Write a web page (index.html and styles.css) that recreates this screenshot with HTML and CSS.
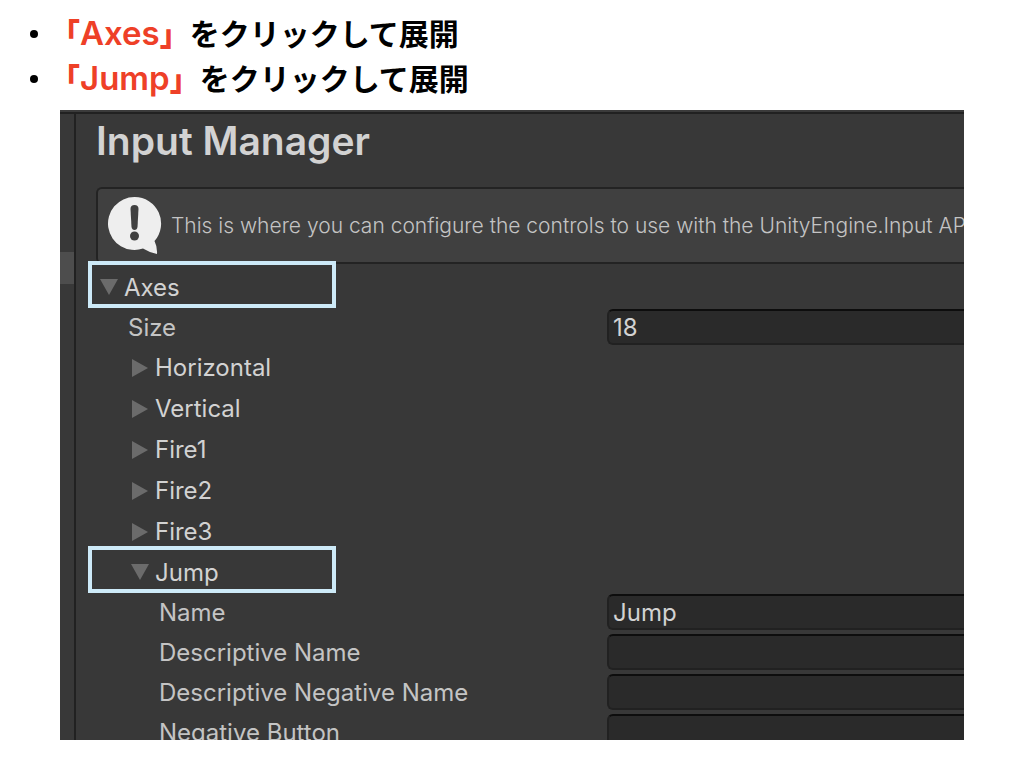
FILE: index.html
```html
<!DOCTYPE html>
<html lang="ja">
<head>
<meta charset="utf-8">
<title>Input Manager</title>
<link rel="stylesheet" href="styles.css">
</head>
<body>
<main class="slide">
  <ul class="steps">
    <li><strong>「<span class="latin">Axes</span>」</strong>をクリックして展開</li>
    <li><strong>「<span class="latin">Jump</span>」</strong>をクリックして展開</li>
  </ul>
  <section class="window" lang="en">
    <div class="sidebar"><div class="selected"></div></div>
    <div class="panel">
      <h1>Input Manager</h1>
      <div class="help">
        <svg class="bubble" viewBox="0 0 54 58" aria-hidden="true">
          <path fill="#eee" d="M26.500 0A26.500 26.500 0 1 0 35 51.600Q42 56 49 57Q49.500 50 46.500 44A26.500 26.500 0 0 0 26.500 0Z"/>
          <path fill="#404040" d="M22.500 12Q22.500 8 26.500 8T30.500 12L29.500 30Q29 33 26.500 33T23.500 30Z"/>
          <circle cx="26.500" cy="39" r="4.500" fill="#404040"/>
        </svg>
        <p>This is where you can configure the controls to use with the UnityEngine.Input API.</p>
      </div>
      <div class="tree">
        <button class="foldout marked root" aria-expanded="true"><svg class="arrow" viewBox="0 0 18 18"><path d="M0 1H18L9 17Z"/></svg>Axes</button>
        <div class="field level1"><label for="size">Size</label><input id="size" value="18"></div>
        <button class="foldout" aria-expanded="false"><svg class="arrow" viewBox="0 0 18 18"><path d="M1 0V18L17 9Z"/></svg>Horizontal</button>
        <button class="foldout" aria-expanded="false"><svg class="arrow" viewBox="0 0 18 18"><path d="M1 0V18L17 9Z"/></svg>Vertical</button>
        <button class="foldout" aria-expanded="false"><svg class="arrow" viewBox="0 0 18 18"><path d="M1 0V18L17 9Z"/></svg>Fire1</button>
        <button class="foldout" aria-expanded="false"><svg class="arrow" viewBox="0 0 18 18"><path d="M1 0V18L17 9Z"/></svg>Fire2</button>
        <button class="foldout" aria-expanded="false"><svg class="arrow" viewBox="0 0 18 18"><path d="M1 0V18L17 9Z"/></svg>Fire3</button>
        <button class="foldout marked" aria-expanded="true"><svg class="arrow" viewBox="0 0 18 18"><path d="M0 1H18L9 17Z"/></svg>Jump</button>
        <div class="field"><label for="name">Name</label><input id="name" value="Jump"></div>
        <div class="field"><label for="desc">Descriptive Name</label><input id="desc"></div>
        <div class="field"><label for="descneg">Descriptive Negative Name</label><input id="descneg"></div>
        <div class="field"><label for="neg">Negative Button</label><input id="neg"></div>
      </div>
    </div>
  </section>
</main>
</body>
</html>
```
FILE: styles.css
```css
* { box-sizing: border-box; }
body { margin: 0; background: #fff; font-family: Inter, "Noto Sans", sans-serif; }
.slide { display: flex; flex-direction: column; height: 100vh; padding: 10px 60px 28px 0; }
.steps {
  margin: 0 0 10px; padding: 0; list-style: none;
  font: 700 30px/45px "Noto Sans CJK JP", sans-serif; color: #000;
}
.steps li { display: flex; align-items: center; height: 45px; white-space: nowrap; }
.steps li::before { content: ""; width: 8px; height: 8px; margin: 3px 12px 0 30px; border-radius: 50%; background: #000; }
.steps strong { color: #ee4027; }
.latin { font: 600 33px/45px Inter, sans-serif; }
.window {
  display: flex; flex: 1; min-height: 0; margin-left: 60px; overflow: hidden;
  background: #383838; border-top: 2px solid #3b3b3b; box-shadow: inset 0 2px #212121;
}
.sidebar { flex: none; width: 16px; margin-top: 2px; padding-top: 138px; border-right: 2px solid #212121; }
.selected { height: 32px; background: #4d4d4d; }
.panel { flex: 1; min-width: 0; padding: 5px 0 0 12px; }
h1 { margin: 0 0 22px 8px; font-size: 39px; font-weight: 600; line-height: 48px; color: #d2d2d2; }
.help {
  display: flex; align-items: center; gap: 9px; height: 77px; margin-left: 8px; padding-left: 10px;
  border: 2px solid #232323; border-right: 0; border-radius: 6px 0 0 6px;
  background: #404040; color: #c4c4c4; overflow: hidden;
}
.bubble { flex: none; width: 54px; height: 58px; }
.help p { margin: 0; font-size: 21px; font-weight: 300; line-height: 32px; white-space: nowrap; }
.tree { display: flex; flex-direction: column; margin-top: 3px; font-size: 24px; color: #d2d2d2; }
.foldout {
  display: flex; align-items: center; gap: 6px; flex: none; width: 248px; height: 41px; padding: 0 0 0 43px;
  border: 0; background: none; color: inherit; font: inherit; text-align: left;
}
.root { padding-left: 12px; }
.marked { position: relative; height: 40px; }
.marked::after { content: ""; position: absolute; inset: -6px 0 -1px; border: 4px solid #cdeaf8; }
.arrow { width: 18px; height: 18px; fill: #6b6b6b; }
.field { display: flex; align-items: center; flex: none; height: 40px; padding-left: 71px; color: #c4c4c4; }
.field label { flex: none; width: 448px; }
.level1 { padding-left: 40px; }
.level1 label { width: 479px; }
.field input {
  flex: 1; min-width: 0; height: 36px; padding: 0 4px; border: 2px solid #212121; border-top-color: #0d0d0d; border-right: 0;
  border-radius: 6px 0 0 6px; background: #2a2a2a; color: #d2d2d2; font: inherit;
}
```
